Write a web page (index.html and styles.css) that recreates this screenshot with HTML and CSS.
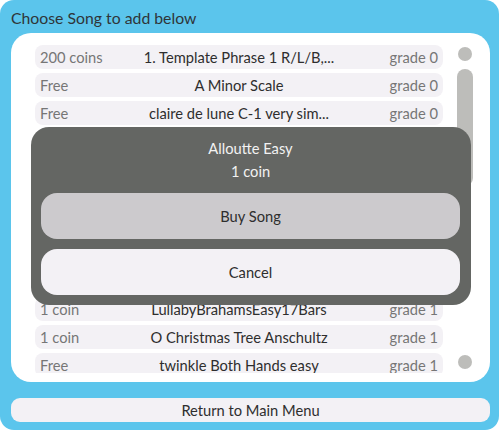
FILE: index.html
```html
<!DOCTYPE html>
<html>
<head>
<meta charset="utf-8">
<link rel="stylesheet" href="styles.css">
</head>
<body>
<div class="app">
  <div class="title">Choose Song to add below</div>
  <div class="panel">
    <div class="list">
      <div class="row"><span class="price">200 coins</span><span class="name">1. Template Phrase 1 R/L/B,...</span><span class="grade">grade 0</span></div>
      <div class="row"><span class="price">Free</span><span class="name">A Minor Scale</span><span class="grade">grade 0</span></div>
      <div class="row"><span class="price">Free</span><span class="name">claire de lune C-1 very sim...</span><span class="grade">grade 0</span></div>
      <div class="row"><span class="price">1 coin</span><span class="name">Alloutte Easy</span><span class="grade">grade 1</span></div>
      <div class="row"><span class="price">Free</span><span class="name">Amazing Grace</span><span class="grade">grade 1</span></div>
      <div class="row"><span class="price">Free</span><span class="name">Frere Jacques</span><span class="grade">grade 1</span></div>
      <div class="row"><span class="price">1 coin</span><span class="name">Jingle Bells</span><span class="grade">grade 1</span></div>
      <div class="row"><span class="price">Free</span><span class="name">London Bridge</span><span class="grade">grade 1</span></div>
      <div class="row"><span class="price">Free</span><span class="name">Lullaby Brahams</span><span class="grade">grade 1</span></div>
      <div class="row"><span class="price">1 coin</span><span class="name">LullabyBrahamsEasy17Bars</span><span class="grade">grade 1</span></div>
      <div class="row"><span class="price">1 coin</span><span class="name">O Christmas Tree Anschultz</span><span class="grade">grade 1</span></div>
      <div class="row"><span class="price">Free</span><span class="name">twinkle Both Hands easy</span><span class="grade">grade 1</span></div>
    </div>
    <div class="scroll">
      <div class="dot"></div>
      <div class="track"></div>
      <div class="spacer"></div>
      <div class="dot"></div>
    </div>
  </div>
  <div class="return">Return to Main Menu</div>
  <div class="modal">
    <div class="modal-text">Alloutte Easy</div>
    <div class="modal-text">1 coin</div>
    <div class="btn buy">Buy Song</div>
    <div class="btn cancel">Cancel</div>
  </div>
</div>
</body>
</html>
```

FILE: styles.css
```css
html, body {
  margin: 0;
  padding: 0;
  background: #ffffff;
}
body {
  font-family: Lato, "Open Sans", sans-serif;
}
.app {
  position: relative;
  width: 499px;
  height: 430px;
  background: #5bc5ec;
  border-radius: 14px;
  display: flex;
  flex-direction: column;
  box-sizing: border-box;
  padding: 0 9px 0 11px;
}
.title {
  height: 33px;
  line-height: 36px;
  font-size: 15.8px;
  color: #2f3539;
}
.panel {
  width: 479px;
  height: 349px;
  background: #ffffff;
  border-radius: 20px;
  box-sizing: border-box;
  padding: 12px 0 0 24px;
  display: flex;
}
.list {
  width: 408px;
  height: 328px;
  overflow: hidden;
  display: flex;
  flex-direction: column;
  gap: 4px;
}
.row {
  flex: none;
  height: 24px;
  background: #f3f1f5;
  border-radius: 8px;
  display: grid;
  grid-template-columns: 1fr auto 1fr;
  align-items: center;
  padding: 0 5px;
  font-size: 14.7px;
  line-height: 24px;
}
.price { color: #767676; }
.name { color: #2e2e2e; text-align: center; white-space: nowrap; }
.grade { color: #767676; text-align: right; }
.scroll {
  margin-left: 14px;
  width: 16px;
  height: 328px;
  box-sizing: border-box;
  padding: 2px 0 4px;
  display: flex;
  flex-direction: column;
  align-items: center;
}
.dot {
  width: 14px;
  height: 14px;
  border-radius: 50%;
  background: #bdbdba;
}
.track {
  margin-top: 8px;
  width: 16px;
  height: 117px;
  border-radius: 8px;
  background: #bdbdba;
}
.spacer { flex: 1; }
.return {
  margin-top: 16px;
  width: 479px;
  height: 24px;
  background: #f3f1f5;
  border-radius: 9px;
  text-align: center;
  font-size: 14.7px;
  line-height: 24px;
  color: #2e2e2e;
}
.modal {
  position: absolute;
  left: 31px;
  top: 127px;
  width: 440px;
  height: 178px;
  background: #646663;
  border-radius: 18px;
  box-sizing: border-box;
  padding: 11px 11px 10px 10px;
  display: flex;
  flex-direction: column;
}
.modal-text {
  text-align: center;
  color: #f2f2f2;
  font-size: 14.7px;
  line-height: 21px;
}
.modal-text + .modal-text {
  margin-top: 2px;
}
.btn {
  height: 46px;
  border-radius: 16px;
  text-align: center;
  line-height: 46px;
  font-size: 14.7px;
  color: #2e2e2e;
}
.buy {
  margin-top: 11px;
  background: #cccacd;
}
.cancel {
  margin-top: 10px;
  background: #f3f1f5;
}
```
